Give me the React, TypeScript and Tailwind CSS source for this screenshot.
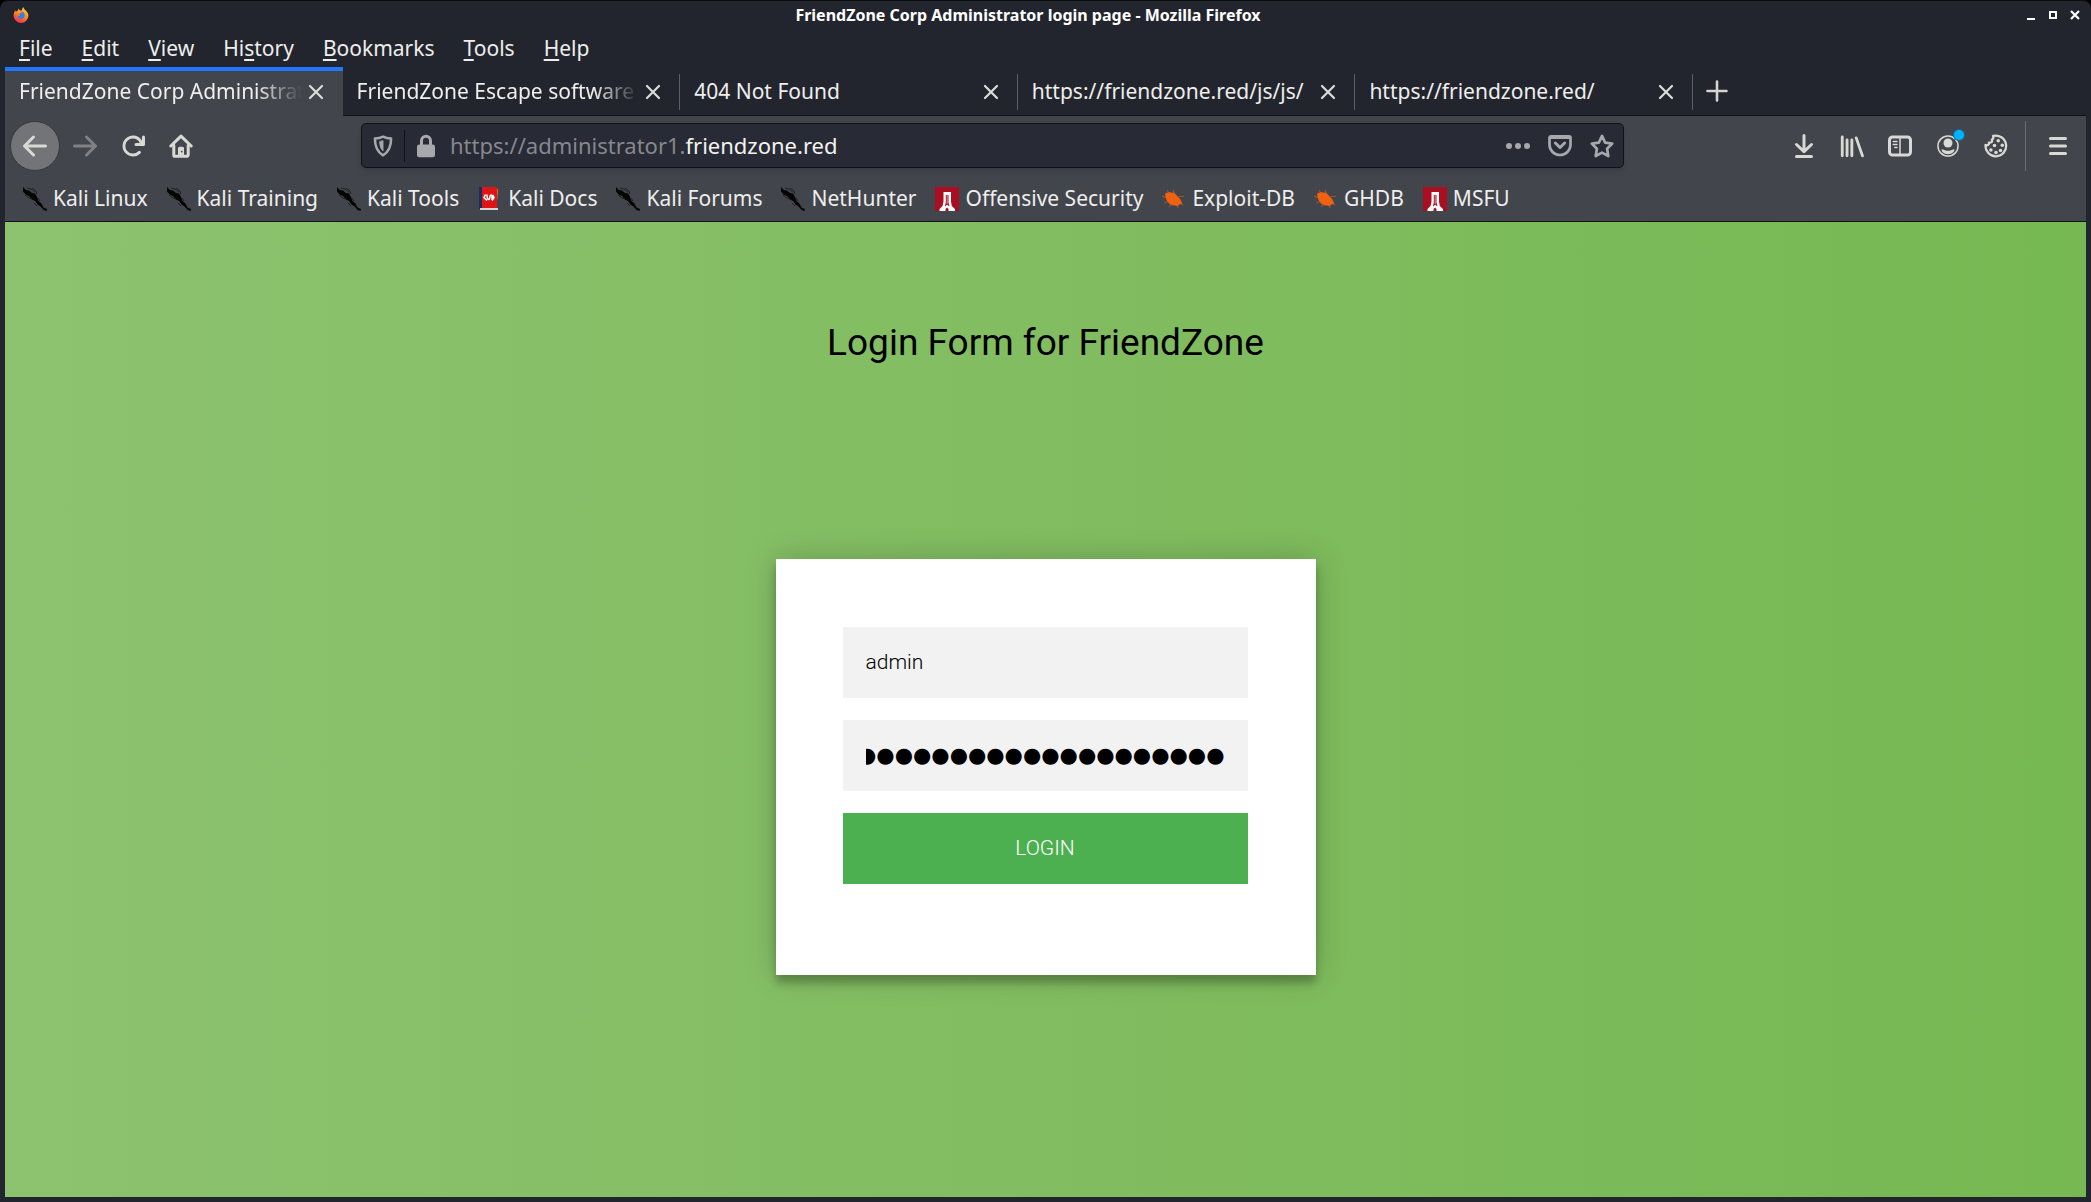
import type { ReactNode } from "react";

const MENUS: [string, string, string][] = [
  ["", "F", "ile"],
  ["", "E", "dit"],
  ["", "V", "iew"],
  ["Hi", "s", "tory"],
  ["", "B", "ookmarks"],
  ["", "T", "ools"],
  ["", "H", "elp"],
];

const TABS = [
  "FriendZone Corp Administrator login page",
  "FriendZone Escape software",
  "404 Not Found",
  "https://friendzone.red/js/js/",
  "https://friendzone.red/",
];

const FADE = "[mask-image:linear-gradient(to_right,black_84%,transparent)]";

function Icon({ children }: { children: ReactNode }) {
  return (
    <svg
      viewBox="0 0 16 16"
      className="h-6 w-6 shrink-0"
      fill="none"
      stroke="currentColor"
      strokeWidth="2"
      strokeLinecap="round"
      strokeLinejoin="round"
      aria-hidden="true"
    >
      {children}
    </svg>
  );
}

function FirefoxLogo() {
  return (
    <svg viewBox="0 0 16 16" className="h-4 w-4" aria-hidden="true">
      <defs>
        <linearGradient id="flame" x1="0.8" y1="0" x2="0.3" y2="1">
          <stop offset="0" stopColor="#ffd93b" />
          <stop offset="0.5" stopColor="#ff8a1f" />
          <stop offset="1" stopColor="#f3264c" />
        </linearGradient>
      </defs>
      <path
        d="M8 16a7.4 7.4 0 0 1-7.4-7.4C.6 6.300 1.400 4.300 2.300 3.200l.6 1.600c.5-.5 1-.8 1.600-.8l.8-2c1 0 1.400 1.200 2.200 1.600C8.500 4 9.300 3 9.200 1.700L10.400 0c.2 1.800 1.400 2.600 2.600 3.800 1.500 1.500 2.400 3 2.400 4.800A7.400 7.400 0 0 1 8 16z"
        fill="url(#flame)"
      />
      <path d="M9 4.600c2 .4 2.800 2 2.700 4-.1 2-1.600 3.400-3.500 3.400-2.300 0-3.800-1.600-3.700-3.600 1 .9 2.100.5 3.100-.2-1.300-.3-1.700-1.200-1.200-1.800.8.200 2.300-.6 2.600-1.800z" fill="#3f7be8" />
    </svg>
  );
}

function KaliIcon() {
  return (
    <svg viewBox="0 0 24 24" className="h-6 w-6 shrink-0" aria-hidden="true">
      <path d="M0 0l3 3 3 .4 3 2.600 3 .5 2 3.500 1.500 4 3 2.500 2 4 3.500 1.500-.5 2-3-1-3-3.500-3-2-2.500-3.500-3-1.500L6 9 3 8 0 4.500z" fill="#050506" />
      <path d="M4 1l5 1.500 3 3M9 1l4 3 .8 3M2 8l4 3 3 1M15 11l2 3M11 16l3 3" stroke="#202124" strokeWidth="1" fill="none" />
    </svg>
  );
}

function DocsIcon() {
  return (
    <svg viewBox="0 0 24 24" className="h-6 w-6 shrink-0" aria-hidden="true">
      <rect x="2" y="0" width="17" height="23" rx="1" fill="#dc1616" />
      <rect x="1" y="0" width="3" height="22" fill="#1b2c5e" />
      <rect x="19" y="2" width="1" height="5" fill="#e2711c" />
      <rect x="19" y="7" width="1" height="5" fill="#68725e" />
      <rect x="2" y="21" width="18" height="2" fill="#d8d3d3" />
      <path d="M7.500 7.500L6 10.500l3 3M14.500 8l1.500 2.500-2 3M9 7.500c0 3 1 5 2 5s.5-4.500 2-4.500 1 3 1 5" stroke="#fff" strokeWidth="1.600" fill="none" />
    </svg>
  );
}

function OffsecIcon() {
  return (
    <svg viewBox="0 0 24 24" className="h-6 w-6 shrink-0" aria-hidden="true">
      <rect width="24" height="24" fill="#a90f20" />
      <path d="M8.500 5h7.500v9.500l.8 4.500 3.200 3v2h-6.500v-2l-1.500-1.500L10.500 22v2H4.500v-2l3-3 1-4.500z" fill="#fff" />
      <path d="M10.800 8h2.700v7.500l1 4-2.300-1.800-2.400 1.800 1-4z" fill="#a90f20" />
      <path d="M12.200 7v10" stroke="#e8c4c8" strokeWidth=".8" />
    </svg>
  );
}

function ExploitIcon() {
  return (
    <svg viewBox="0 0 24 24" className="h-6 w-6 shrink-0" aria-hidden="true">
      <path
        d="M5 3l3 5M11 3l2 5M0 9l5 2M2 16l5-2M7 20l3-4M22 9l-6 1M21 18l-4-2M16 21l-1-4"
        stroke="#9a5634"
        strokeWidth="1.200"
        fill="none"
      />
      <path d="M3 7c1.500-1.500 4-2 6-1.500 3 0 5.500 2 7 4.500 1.500 1 2.500 2.500 3 4l1.500 2.500-2.500.5c-1.500 2-3 2-4.500 1.500-3 .5-6-1-8-4C4.500 13 3 10 3 7z" fill="#f0620f" />
    </svg>
  );
}

const BOOKMARKS: [string, () => ReactNode][] = [
  ["Kali Linux", KaliIcon],
  ["Kali Training", KaliIcon],
  ["Kali Tools", KaliIcon],
  ["Kali Docs", DocsIcon],
  ["Kali Forums", KaliIcon],
  ["NetHunter", KaliIcon],
  ["Offensive Security", OffsecIcon],
  ["Exploit-DB", ExploitIcon],
  ["GHDB", ExploitIcon],
  ["MSFU", OffsecIcon],
];

function TitleBar() {
  return (
    <header className="flex h-7 items-center pl-2 pr-[3px]">
      <FirefoxLogo />
      <h1 className="flex-1 pl-1 text-center text-base font-bold text-white">
        FriendZone Corp Administrator login page - Mozilla Firefox
      </h1>
      <div className="flex gap-[6px] text-white">
        <button aria-label="Minimize" className="h-4 w-4">
          <svg viewBox="0 0 16 16" className="h-4 w-4"><path d="M4 12h8" stroke="currentColor" strokeWidth="2" /></svg>
        </button>
        <button aria-label="Maximize" className="h-4 w-4">
          <svg viewBox="0 0 16 16" className="h-4 w-4"><path d="M5 5h6v6H5z" stroke="currentColor" strokeWidth="2" fill="none" /></svg>
        </button>
        <button aria-label="Close window" className="h-4 w-4">
          <svg viewBox="0 0 16 16" className="h-4 w-4"><path d="M4 4l8 8M12 4l-8 8" stroke="currentColor" strokeWidth="2.200" /></svg>
        </button>
      </div>
    </header>
  );
}

function MenuBar() {
  return (
    <nav aria-label="Menu" className="flex h-[38px] items-center gap-[29px] pl-[14px]">
      {MENUS.map(([before, key, after]) => (
        <button key={before + key + after} className="leading-9">
          {before}
          <span className="underline decoration-2 underline-offset-3">{key}</span>
          {after}
        </button>
      ))}
    </nav>
  );
}

function TabStrip() {
  return (
    <div className="flex h-[49px] border-b border-[#111318]">
      <div className="grid w-[1688px] grid-cols-5">
        {TABS.map((title, i) => (
          <div
            key={title}
            className={
              i === 0
                ? "-mb-px flex min-w-0 items-center bg-[#43454c] pl-[14px] pr-px shadow-[inset_0_4px_0_#2277ff]"
                : "-mb-px flex min-w-0 items-center pl-[14px]"
            }
          >
            <span className={"min-w-0 flex-1 overflow-hidden whitespace-nowrap " + (i < 2 ? FADE : "")}>{title}</span>
            <button aria-label={"Close " + title} className="mr-4 ml-1 flex h-5 w-5 items-center justify-center">
              <svg viewBox="0 0 16 16" className="h-4 w-4" aria-hidden="true">
                <path d="M2 2l12 12M14 2L2 14" stroke="#dcdcd8" strokeWidth="2.200" strokeLinecap="round" />
              </svg>
            </button>
            {i > 0 && <span className="h-9 w-px bg-[#5d5f66]" />}
          </div>
        ))}
      </div>
      <button aria-label="New tab" className="ml-3 flex w-6 items-center justify-center text-[#d4d4d0]">
        <svg viewBox="0 0 24 24" className="h-6 w-6" aria-hidden="true">
          <path d="M12 2.500v19M2.500 12h19" stroke="currentColor" strokeWidth="2.600" strokeLinecap="round" />
        </svg>
      </button>
    </div>
  );
}

const BACK = "M15 7H3.414l4.293-4.293a1 1 0 0 0-1.414-1.414l-6 6a1 1 0 0 0 0 1.414l6 6a1 1 0 0 0 1.414-1.414L3.414 9H15a1 1 0 0 0 0-2z";
const RELOAD =
  "M15 1a1 1 0 0 0-1 1v2.418A6.995 6.995 0 1 0 8 15a6.954 6.954 0 0 0 4.950-2.050 1 1 0 0 0-1.414-1.414A5.019 5.019 0 1 1 12.549 6H10a1 1 0 0 0 0 2h5a1 1 0 0 0 1-1V2a1 1 0 0 0-1-1z";

function AddressBar() {
  return (
    <div className="flex h-[45px] flex-1 items-center rounded-[5px] border border-[#111217] bg-[#282a36] px-[9px] text-[22px] text-[#a7a8ac] shadow-md shadow-black/10">
      <button aria-label="Tracking protection">
        <Icon>
          <path d="M8 1.800c1.600.8 3.600 1.200 5.400 1.200 0 5-1 8.700-5.400 11.200C3.600 11.700 2.600 8 2.600 3 4.400 3 6.400 2.600 8 1.800z" strokeWidth="1.700" />
          <path d="M8 4.700v6.500c-1.600-1.400-2.100-3.100-2.200-6z" fill="currentColor" strokeWidth=".6" />
        </Icon>
      </button>
      <span className="mx-[9px] h-8 w-px bg-[#111217]" />
      <button aria-label="Site information">
        <Icon>
          <rect x="2.500" y="7.500" width="11" height="7.500" rx="1" fill="currentColor" strokeWidth="1" />
          <path d="M5 7V4.500a3 3 0 0 1 6 0V7" />
        </Icon>
      </button>
      <div className="relative ml-3 flex-1 whitespace-pre">
        <span aria-hidden="true">
          <span className="text-[#87888e]">https://administrator1.</span>
          <span className="text-[#f2f2ef]">friendzone.red</span>
        </span>
        <input
          aria-label="Address"
          defaultValue="https://administrator1.friendzone.red"
          className="absolute inset-0 w-full bg-transparent text-transparent outline-none"
        />
      </div>
      <div className="flex gap-[18px]">
        <button aria-label="Page actions">
          <Icon>
            <g fill="currentColor" stroke="none">
              <circle cx="2" cy="8" r="2" />
              <circle cx="8" cy="8" r="2" />
              <circle cx="14" cy="8" r="2" />
            </g>
          </Icon>
        </button>
        <button aria-label="Save to Pocket">
          <Icon>
            <path d="M2 1.500h12a1 1 0 0 1 1 1V7A7 7 0 0 1 1 7V2.500a1 1 0 0 1 1-1z" strokeWidth="1.800" />
            <path d="M1.500 2.300h13" strokeWidth="2" />
            <path d="M4.900 6L8 9l3.100-3" strokeWidth="2" />
          </Icon>
        </button>
        <button aria-label="Bookmark this page">
          <Icon>
            <path d="M8 1.300l2.100 4.400 4.700.7-3.400 3.400.8 4.900L8 12.400l-4.200 2.300.8-4.900L1.200 6.400l4.700-.7z" strokeWidth="1.800" />
          </Icon>
        </button>
      </div>
    </div>
  );
}

function NavBar() {
  return (
    <div className="flex h-[60px] items-center pb-px pl-[5px] pr-4 text-[#d8d8d4]">
      <button aria-label="Back" className="flex h-[50px] w-[50px] items-center justify-center rounded-full border border-[#36383e] bg-[#737478]">
        <Icon>
          <path d={BACK} fill="currentColor" stroke="none" />
        </Icon>
      </button>
      <button aria-label="Forward" disabled className="ml-[13px] text-[#808186]">
        <svg viewBox="0 0 16 16" className="h-6 w-6 rotate-180" aria-hidden="true">
          <path d={BACK} fill="currentColor" />
        </svg>
      </button>
      <button aria-label="Reload" className="ml-6">
        <Icon>
          <path d={RELOAD} fill="currentColor" stroke="none" />
        </Icon>
      </button>
      <button aria-label="Home" className="mr-[168px] ml-6">
        <Icon>
          <path d="M1.200 8L8 1.400 14.800 8" />
          <path d="M3.200 7.500V14a.9.9 0 0 0 .9.900h7.800a.9.900 0 0 0 .9-.9V7.500" />
          <path d="M6 15V9.500a1 1 0 0 1 1-1h2a1 1 0 0 1 1 1V15h-1.600v-2H8v2z" fill="currentColor" stroke="none" />
          <path d="M7 10h2v4.500H7z" fill="currentColor" stroke="none" />
          <circle cx="8.500" cy="11.700" r=".6" fill="#43454c" stroke="none" />
        </Icon>
      </button>
      <AddressBar />
      <div className="ml-[168px] flex items-center gap-6">
        <button aria-label="Downloads">
          <Icon>
            <path d="M8 1v10.500M3 7l5 4.800L13 7M3 15h10" />
          </Icon>
        </button>
        <button aria-label="Library">
          <Icon>
            <path d="M1.500 2v12.500M4.700 4v10.500M7.900 4v10.500M10.800 2.600l4.200 12" strokeWidth="1.900" />
          </Icon>
        </button>
        <button aria-label="Sidebars">
          <Icon>
            <rect x="1" y="2" width="14" height="12" rx="2" />
            <path d="M8 2v12" strokeWidth="1" />
            <path d="M3.500 5h2.500M3.500 7h2.500M4.500 9h1.500" strokeWidth="1" />
          </Icon>
        </button>
        <button aria-label="Account" className="relative">
          <Icon>
            <circle cx="8" cy="8" r="6.700" strokeWidth="1" />
            <circle cx="8" cy="6" r="3" fill="currentColor" stroke="none" />
            <path d="M3.800 10.200c1.200 0 1.800 1 4.200 1s3-1 4.200-1c.5 1.300-1.500 3.300-4.200 3.300s-4.700-2-4.200-3.300z" fill="currentColor" stroke="none" />
          </Icon>
          <span className="absolute -top-1 -right-1 h-[10px] w-[10px] rounded-full bg-[#00b3fa] ring-1 ring-[#176b96]" />
        </button>
        <button aria-label="Cookies">
          <Icon>
            <path d="M6 1.300a6.900 6.900 0 1 1-5 6c1.500.6 2.500-.3 2.300-1.500C5 6 5.800 5 5.200 3.800 6.200 3.200 6.500 2.200 6 1.300z" strokeWidth="1.500" />
            <g fill="currentColor" stroke="none">
              <circle cx="9.500" cy="4.500" r="1.200" />
              <circle cx="7" cy="7.700" r="1.200" />
              <circle cx="12.200" cy="7.500" r="1.200" />
              <circle cx="4.600" cy="10.700" r="1.200" />
              <circle cx="8" cy="12.300" r="1.200" />
              <circle cx="11" cy="11" r="1.200" />
            </g>
          </Icon>
        </button>
      </div>
      <span className="mr-5 ml-[17px] h-[50px] w-px bg-[#6b6c71]" />
      <button aria-label="Open menu">
        <Icon>
          <path d="M3 3h10M3 8h10M3 13h10" />
        </Icon>
      </button>
    </div>
  );
}

function BookmarksBar() {
  return (
    <nav aria-label="Bookmarks" className="flex h-[46px] items-center gap-[19px] border-b border-[#111318] pl-[18px]">
      {BOOKMARKS.map(([name, Glyph]) => (
        <a key={name} href="#" className="flex items-center gap-[6px] whitespace-nowrap">
          <Glyph />
          {name}
        </a>
      ))}
    </nav>
  );
}

const FIELD = "block h-[71px] w-full bg-[#f2f2f2] px-[23px] pb-[2px] outline-none";

function LoginPage() {
  return (
    <main className="flex flex-1 flex-col items-center bg-linear-to-l/srgb from-[#76b852] to-[#8dc26f] font-['Roboto',sans-serif] text-black">
      <h2 className="mt-[98px] text-[37px] leading-[46px]">Login Form for FriendZone</h2>
      <form
        onSubmit={(e) => e.preventDefault()}
        className="mt-[193px] flex w-[540px] flex-col gap-[22px] bg-white pr-[68px] pl-[67px] pt-[68px] pb-[91px] text-[21px] font-light shadow-[0_0_30px_rgba(0,0,0,0.2),0_8px_8px_rgba(0,0,0,0.24)]"
      >
        <input aria-label="Username" defaultValue="admin" className={FIELD} />
        <div className="relative">
          <input type="password" aria-label="Password" defaultValue="aaaaaaaaaaaaaaaaaaaa" className={FIELD + " text-transparent"} />
          <div aria-hidden="true" className="pointer-events-none absolute inset-x-[23px] inset-y-0 flex items-center justify-end overflow-hidden font-['DejaVu_Sans'] text-[21px] font-normal">
            ●●●●●●●●●●●●●●●●●●●●
          </div>
        </div>
        <button className="h-[71px] bg-[#4caf50] text-white">LOGIN</button>
      </form>
    </main>
  );
}

export default function App() {
  return (
    <div className="min-h-screen bg-black">
      <div className="flex min-h-screen flex-col rounded-t-lg border-t border-[#0d0e12] bg-[#23252e] px-[5px] pb-[5px] font-['Noto_Sans',sans-serif] text-[21px] text-[#eeeeec]">
        <TitleBar />
        <MenuBar />
        <TabStrip />
        <div className="bg-[#43454c]">
          <NavBar />
          <BookmarksBar />
        </div>
        <LoginPage />
      </div>
    </div>
  );
}
